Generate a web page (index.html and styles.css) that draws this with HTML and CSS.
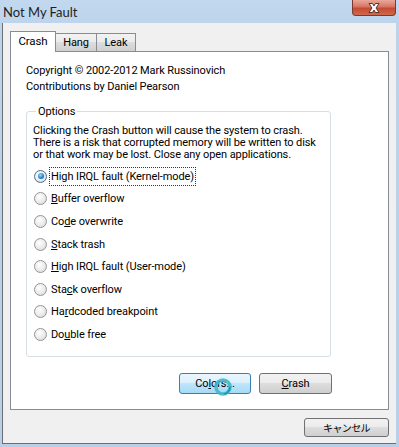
FILE: index.html
```html
<!DOCTYPE html>
<html lang="en">
<head>
  <meta charset="UTF-8">
  <title>Not My Fault</title>
  <link rel="stylesheet" href="styles.css">
</head>
<body>

  <div class="window">
    <div class="titlebar">
      <span class="title">Not My Fault</span>
      <div class="close">
        <svg width="20" height="12" viewBox="0 0 20 12">
          <path d="M5 1.5 H8.5 L10 4 L11.5 1.5 H15 L12 6 L15 10.5 H11.5 L10 8 L8.5 10.5 H5 L8 6 Z" fill="#fff" stroke="#4a2a24" stroke-width="0.9" stroke-linejoin="round"/>
        </svg>
      </div>
    </div>

    <div class="client">
      <div class="tabs">
        <div class="tab active">Crash</div>
        <div class="tab hang">Hang</div>
        <div class="tab leak">Leak</div>
      </div>

      <div class="page">
        <p class="credits">
          Copyright © 2002-2012 Mark Russinovich<br>
          Contributions by Daniel Pearson
        </p>

        <fieldset class="options">
          <legend>Options</legend>
          <p class="warning">
            Clicking the Crash button will cause the system to crash.<br>
            There is a risk that corrupted memory will be written to disk<br>
            or that work may be lost. Close any open applications.
          </p>

          <div class="radios">
            <div class="radio-row"><span class="radio checked"></span><span class="label focus">High IRQL fault (Kernel-mode)</span></div>
            <div class="radio-row"><span class="radio"></span><span class="label"><u>B</u>uffer overflow</span></div>
            <div class="radio-row"><span class="radio"></span><span class="label">Co<u>d</u>e overwrite</span></div>
            <div class="radio-row"><span class="radio"></span><span class="label"><u>S</u>tack trash</span></div>
            <div class="radio-row"><span class="radio"></span><span class="label"><u>H</u>igh IRQL fault (User-mode)</span></div>
            <div class="radio-row"><span class="radio"></span><span class="label">Sta<u>c</u>k overflow</span></div>
            <div class="radio-row"><span class="radio"></span><span class="label">Ha<u>r</u>dcoded breakpoint</span></div>
            <div class="radio-row"><span class="radio"></span><span class="label">Do<u>u</u>ble free</span></div>
          </div>
        </fieldset>

        <div class="page-buttons">
          <button class="btn hover">Co<u>l</u>ors...
            <svg class="busy" width="20" height="20" viewBox="0 0 20 20">
              <circle cx="10" cy="10" r="7" fill="none" stroke="#3fb7c9" stroke-width="3.5" opacity="0.9"/>
              <circle cx="10" cy="10" r="7" fill="none" stroke="#1f8fb0" stroke-width="1.5" stroke-dasharray="10 34"/>
            </svg>
          </button>
          <button class="btn"><u>C</u>rash</button>
        </div>
      </div>

      <div class="dialog-buttons">
        <button class="btn cancel">キャンセル</button>
      </div>
    </div>
  </div>

</body>
</html>
```

FILE: styles.css
```css
body {
  margin: 0;
  font-family: Roboto, "Noto Sans CJK JP", sans-serif;
  font-size: 11px;
  letter-spacing: -0.1px;
  color: #000;
  background: #b9d1ea;
}

.window {
  width: 399px;
  height: 447px;
  display: flex;
  flex-direction: column;
  background: linear-gradient(#c2d8ef, #bcd3eb 30px, #b7cfe8);
  overflow: hidden;
}

.titlebar {
  height: 23px;
  display: flex;
  align-items: flex-start;
  justify-content: space-between;
  flex-shrink: 0;
}

.title {
  font-family: Lato, sans-serif;
  font-size: 13px;
  letter-spacing: 0;
  margin: 4px 0 0 3px;
  color: #1e1e1e;
}

.close {
  width: 44px;
  height: 16px;
  margin-right: 3px;
  border: 1px solid #7a3a2e;
  border-top: none;
  border-radius: 0 0 4px 4px;
  background: linear-gradient(#e9a89a, #d77563 45%, #c54a33 55%, #cf6a4c);
  display: flex;
  align-items: center;
  justify-content: center;
  box-sizing: border-box;
}

.client {
  flex: 1;
  margin: 0 3px 3px 2px;
  background: #f0f0f0;
  border-left: 1px solid #6e6e6e;
  border-bottom: 1px solid #6e6e6e;
  padding: 8px 7px 0 7px;
  display: flex;
  flex-direction: column;
}

.tabs {
  display: flex;
  align-items: flex-end;
  height: 20px;
  position: relative;
  z-index: 1;
}

.tab {
  height: 18px;
  box-sizing: border-box;
  border: 1px solid #898c95;
  border-bottom: none;
  margin-left: -1px;
  background: linear-gradient(#f2f2f2, #ebebeb 50%, #dddddd 50%, #cfcfcf);
  line-height: 17px;
  text-align: center;
}

.tab.active {
  width: 46px;
  height: 21px;
  margin-left: 0;
  margin-bottom: -1px;
  background: #fff;
  line-height: 19px;
  font-size: 11.5px;
}

.tab.hang {
  width: 42px;
}

.tab.leak {
  width: 40px;
}

.page {
  height: 359px;
  background: #fff;
  border: 1px solid #898c95;
  box-sizing: border-box;
  padding: 11px 14px 0 15px;
}

.credits {
  margin: 0;
  line-height: 16px;
}

.options {
  margin: 10px 0 0 0;
  width: 305px;
  height: 252px;
  box-sizing: border-box;
  border: 1px solid #d5dfe5;
  border-radius: 3px;
  padding: 0 6px;
}

.options legend {
  padding: 0 2px;
  margin-left: 3px;
  line-height: 13px;
}

.warning {
  margin: 7px 0 0 0;
  line-height: 12px;
  white-space: nowrap;
}

.radios {
  margin-top: 4px;
}

.radio-row {
  height: 22.6px;
  display: flex;
  align-items: center;
  white-space: nowrap;
}

.radio {
  width: 11px;
  height: 11px;
  border-radius: 50%;
  border: 1px solid #959595;
  background: radial-gradient(circle at 40% 35%, #ffffff, #e8e8e8 60%, #cfcfcf);
  margin: 0 2px 0 1px;
  position: relative;
  flex-shrink: 0;
}

.radio.checked {
  border-color: #4b6e8c;
}

.radio.checked::after {
  content: "";
  position: absolute;
  left: 2.5px;
  top: 2.5px;
  width: 6px;
  height: 6px;
  border-radius: 50%;
  background: radial-gradient(circle at 40% 35%, #8fe0ff, #1f7fc4 60%, #0f4f8a);
}

.label {
  padding: 2px 1px;
  line-height: 13px;
  border: 1px dotted transparent;
}

.label.focus {
  border-color: #333;
}

u {
  text-decoration-thickness: 1px;
  text-underline-offset: 1px;
}

.page-buttons {
  display: flex;
  justify-content: flex-end;
  gap: 8px;
  margin: 16px 42px 0 0;
}

.btn {
  font-family: Roboto, "Noto Sans CJK JP", sans-serif;
  font-size: 11px;
  letter-spacing: -0.1px;
  width: 73px;
  height: 21px;
  padding: 0;
  border: 1px solid #707070;
  border-radius: 3px;
  background: linear-gradient(#f2f2f2, #ebebeb 50%, #dddddd 50%, #cfcfcf);
  color: #000;
  position: relative;
}

.btn.hover {
  width: 72px;
  border-color: #3c7fb1;
  background: linear-gradient(#eaf6fd, #d9f0fc 50%, #bee6fd 50%, #a7d9f5);
}

.busy {
  position: absolute;
  left: 33px;
  top: 3px;
}

.dialog-buttons {
  display: flex;
  justify-content: flex-end;
  margin-top: 8px;
}

.cancel {
  width: 85px;
  height: 19px;
  font-size: 10px;
  letter-spacing: -0.6px;
}
```
